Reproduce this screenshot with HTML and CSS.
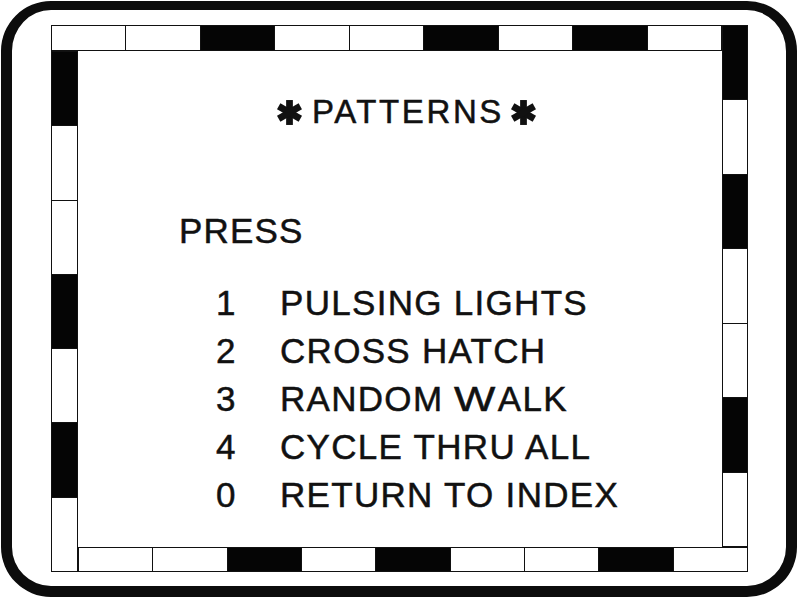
FILE: index.html
```html
<!DOCTYPE html>
<html>
<head>
<meta charset="utf-8">
<link rel="stylesheet" href="styles.css">
</head>
<body>
<div class="frame">
  <div class="ring">
    <div class="strip strip-top">
      <span class="cell"></span><span class="cell"></span><span class="cell dark"></span><span class="cell"></span><span class="cell"></span><span class="cell dark"></span><span class="cell"></span><span class="cell dark"></span><span class="cell"></span>
    </div>
    <div class="strip strip-right">
      <span class="cell dark"></span><span class="cell"></span><span class="cell dark"></span><span class="cell"></span><span class="cell"></span><span class="cell dark"></span><span class="cell"></span>
    </div>
    <div class="strip strip-left">
      <span class="cell dark"></span><span class="cell"></span><span class="cell"></span><span class="cell dark"></span><span class="cell"></span><span class="cell dark"></span><span class="cell"></span>
    </div>
    <div class="strip strip-bottom">
      <span class="cell"></span><span class="cell"></span><span class="cell dark"></span><span class="cell"></span><span class="cell dark"></span><span class="cell"></span><span class="cell"></span><span class="cell dark"></span><span class="cell"></span>
    </div>
    <div class="screen">
      <h1 class="title">
        <svg class="star" viewBox="0 0 26 24" aria-hidden="true"><g stroke="#111" stroke-width="6.5"><line x1="13" y1="0" x2="13" y2="24"/><line x1="2.6" y1="6" x2="23.4" y2="18"/><line x1="2.6" y1="18" x2="23.4" y2="6"/></g></svg>
        <span class="title-text">PATTERNS</span>
        <svg class="star" viewBox="0 0 26 24" aria-hidden="true"><g stroke="#111" stroke-width="6.5"><line x1="13" y1="0" x2="13" y2="24"/><line x1="2.6" y1="6" x2="23.4" y2="18"/><line x1="2.6" y1="18" x2="23.4" y2="6"/></g></svg>
      </h1>
      <p class="press">PRESS</p>
      <ul class="menu">
        <li class="item"><span class="key">1</span><span class="label">PULSING LIGHTS</span></li>
        <li class="item"><span class="key">2</span><span class="label">CROSS HATCH</span></li>
        <li class="item"><span class="key">3</span><span class="label">RANDOM <span class="wide">W</span>ALK</span></li>
        <li class="item"><span class="key">4</span><span class="label">CYCLE THRU ALL</span></li>
        <li class="item"><span class="key">0</span><span class="label">RETURN TO INDEX</span></li>
      </ul>
    </div>
  </div>
</div>
</body>
</html>
```

FILE: styles.css
```css
* { box-sizing: border-box; }
html, body {
  margin: 0;
  padding: 0;
  background: #fff;
}
body {
  width: 798px;
  height: 599px;
  overflow: hidden;
  font-family: "Liberation Sans", Arial, sans-serif;
  color: #111;
  -webkit-text-stroke: 0.5px #111;
}
.frame {
  margin: 1px 0 0 1px;
  width: 796px;
  height: 596px;
  border: 11px solid #0c0c0c;
  border-top-width: 9px;
  border-radius: 50px;
  padding: 15px 38px 14px 39px;
}
.ring {
  display: grid;
  grid-template-columns: 27px 644px 26px;
  grid-template-rows: 26px 496px 25px;
  width: 697px;
  height: 547px;
}
.strip {
  display: flex;
  border: 1px solid #111;
}
.strip-top { grid-column: 1 / 3; grid-row: 1; flex-direction: row; }
.strip-right { grid-column: 3; grid-row: 1 / 3; flex-direction: column; }
.strip-bottom { grid-column: 2 / 4; grid-row: 3; flex-direction: row; }
.strip-left { grid-column: 1; grid-row: 2 / 4; flex-direction: column; }
.cell {
  flex: 1 1 0;
  background: #fff;
}
.strip-top .cell + .cell,
.strip-bottom .cell + .cell { border-left: 1px solid #111; }
.strip-right .cell + .cell,
.strip-left .cell + .cell { border-top: 1px solid #111; }
.cell.dark { background: #050505; }

.screen {
  grid-column: 2;
  grid-row: 2;
  padding: 41px 0 0 101px;
}
.title {
  margin: 0 0 0 97px;
  display: flex;
  align-items: center;
  gap: 9px;
  height: 40px;
  font-weight: normal;
  font-size: 33px;
  line-height: 40px;
  letter-spacing: 2.6px;
}
.title-text { margin-right: -2.6px; }
.star {
  width: 27px;
  height: 25px;
  display: block;
}
.press {
  margin: 75px 0 0 0;
  font-size: 35px;
  line-height: 48px;
  letter-spacing: 1.2px;
}
.menu {
  list-style: none;
  margin: 24px 0 0 0;
  padding: 0 0 0 37px;
}
.item {
  display: flex;
  font-size: 35px;
  line-height: 48px;
  letter-spacing: 1.3px;
}
.key { width: 64px; }
.wide {
  display: inline-block;
  transform: scaleX(1.25);
  transform-origin: left center;
  margin-right: 9px;
}
```
